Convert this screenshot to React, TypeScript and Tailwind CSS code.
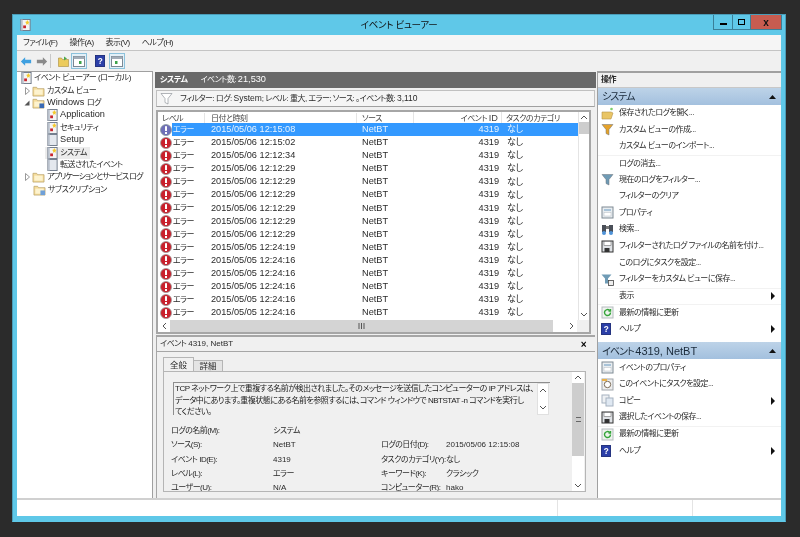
import React from "react";

const font = { fontFamily: '"Liberation Sans","Noto Sans CJK JP",sans-serif' };

const L = ({ children }: { children: React.ReactNode }) => <span className="text-[9.200px] tracking-normal">{children}</span>;

const Err = ({ sel }: { sel?: boolean }) => (
  <svg width="12" height="12" viewBox="0 0 12 12" className="shrink-0">
    <circle cx="6" cy="6" r="5.5" fill={sel ? "#6f6fb8" : "#c9202c"} stroke={sel ? "#8a9a9a" : "#9a9a9a"} strokeWidth="0.8" />
    <rect x="5" y="2.2" width="2" height="4.8" fill="#fff" />
    <rect x="5" y="8" width="2" height="2" fill="#fff" />
  </svg>
);
const LogIc = ({ star = true }: { star?: boolean }) => (
  <svg width="11" height="12" viewBox="0 0 11 13" className="shrink-0">
    <rect x="0.5" y="0.5" width="10" height="12" fill={star ? "#f4f4f4" : "#e4e8ee"} stroke="#6c7686" />
    <rect x="0.5" y="0.5" width="2" height="12" fill="#b8c0cc" />
    {star && <path d="M7.5 1l.8 1.8 1.7.4-1.3 1.2.3 1.8-1.5-.9-1.5.9.3-1.800-1.300-1.200 1.700-.4z" fill="#f4c92c" />}
    {star && <rect x="3" y="7" width="3" height="3" fill="#c8242c" />}
  </svg>
);
const Folder = ({ badge }: { badge?: string }) => (
  <svg width="13" height="12" viewBox="0 0 14 13" className="shrink-0">
    <path d="M1 2.5h4l1 1.500h7v8H1z" fill="#f5dc9a" stroke="#b9a268" strokeWidth="0.8" />
    <rect x="2.5" y="5" width="9" height="5.5" fill="#fdf3cf" />
    {badge && <rect x="8" y="7" width="5" height="5" fill={badge} />}
  </svg>
);
const Funnel = ({ c }: { c: string }) => (
  <svg width="13" height="13" viewBox="0 0 13 13"><path d="M1 1.5h11L8 6.500v5.500L5 10.500V6.500z" fill={c} stroke="#6b7178" strokeWidth="0.5" /></svg>
);
const Save = () => (
  <svg width="13" height="13" viewBox="0 0 13 13"><rect x="1" y="1" width="11" height="11" fill="#dfe2e6" stroke="#333" /><rect x="3" y="1.500" width="7" height="4" fill="#fff" stroke="#555" strokeWidth="0.5" /><rect x="3.500" y="8" width="5" height="4" fill="#333" /></svg>
);
const Help = () => (
  <svg width="10" height="12" viewBox="0 0 11 13"><rect x="0.5" y="0.500" width="10" height="12" fill="#2b3fa8" stroke="#1b2a78" /><text x="5.500" y="10" fontSize="9" fontWeight="700" textAnchor="middle" fill="#fff" fontFamily="Liberation Sans">?</text></svg>
);
const Refresh = () => (
  <svg width="13" height="13" viewBox="0 0 13 13"><rect x="1" y="1" width="11" height="11" fill="#eef3ee" stroke="#b6bcc0" /><path d="M9.500 6.500a3 3 0 1 1-1-2.200M9.500 3v2H7.500" fill="none" stroke="#34a53a" strokeWidth="1.400" /></svg>
);
const Page = () => (
  <svg width="13" height="13" viewBox="0 0 13 13"><rect x="1" y="1" width="11" height="11" fill="#e8edf0" stroke="#7f8a94" /><rect x="3" y="3" width="7" height="2" fill="#a9c3d8" /><rect x="3" y="6.500" width="7" height="3.500" fill="#fff" stroke="#b5bcc2" strokeWidth="0.500" /></svg>
);
const Binoc = () => (
  <svg width="13" height="13" viewBox="0 0 13 13"><rect x="1" y="2" width="4" height="7" fill="#4a4f58" /><rect x="8" y="2" width="4" height="7" fill="#4a4f58" /><rect x="5" y="3" width="3" height="3" fill="#777" /><circle cx="3" cy="10" r="2" fill="#4f93d8" /><circle cx="10" cy="10" r="2" fill="#4f93d8" /></svg>
);
const Open = () => (
  <svg width="13" height="13" viewBox="0 0 13 13"><path d="M1 5h9l2 1-2 6H1z" fill="#e9c566" stroke="#b7934a" strokeWidth="0.600" /><circle cx="10.500" cy="2" r="1.300" fill="#7ccf6a" /></svg>
);
const Clock = () => (
  <svg width="13" height="13" viewBox="0 0 13 13"><rect x="1" y="1" width="11" height="11" fill="#eee" stroke="#a0a6ac" /><circle cx="6.500" cy="6.500" r="3.200" fill="#fff" stroke="#7a6a55" /><path d="M1 1h5v2H1z" fill="#e9b04a" /></svg>
);
const Copy = () => (
  <svg width="13" height="13" viewBox="0 0 13 13"><rect x="1" y="1" width="7" height="8" fill="#eef1f4" stroke="#a6b2c0" /><rect x="5" y="4" width="7" height="8" fill="#dfe8f2" stroke="#a6b2c0" /></svg>
);
const FunnelSave = () => (
  <svg width="13" height="13" viewBox="0 0 13 13"><path d="M0.500 1.500h10L7 5.500v5H4v-5z" fill="#6f9bb5" /><rect x="7.500" y="7.500" width="5" height="5" fill="#eee" stroke="#444" strokeWidth="0.800" /></svg>
);
const Arrow = ({ c, left }: { c: string; left?: boolean }) => (
  <svg width="12" height="11" viewBox="0 0 14 12" className="shrink-0"><path d={left ? "M1 6l5-5v3h7v4H6v3z" : "M13 6L8 1v3H1v4h7v3z"} fill={c} /></svg>
);
const ToolPane = ({ right }: { right?: boolean }) => (
  <div className="w-[16px] h-[16px] shrink-0 flex items-center justify-center border border-[#8cc2dc] bg-[#e3f0f8]">
    <svg width="12" height="11" viewBox="0 0 12 11"><rect x="0.500" y="0.500" width="11" height="10" fill="#fff" stroke="#7b8894" /><rect x="0.500" y="0.500" width="11" height="2.500" fill="#a3adb8" /><rect x={right ? 4 : 6} y="5" width="2.500" height="3" fill="#3ca24a" /></svg>
  </div>
);
const ToolFolder = () => (
  <svg width="11" height="12" viewBox="0 0 11 12" className="shrink-0"><path d="M0.500 3h3l1 1.500h6v7h-10z" fill="#eccb5c" stroke="#a98c3c" strokeWidth="0.600" /><path d="M6 4V1.500l3 2-3 2z" fill="#4ca84c" /></svg>
);

const Tree = ({ pad, arrow, icon, label, sel }: { pad: string; arrow?: "r" | "d"; icon: React.ReactNode; label: React.ReactNode; sel?: boolean }) => (
  <div className={`flex items-center h-[12.400px] whitespace-nowrap ${pad}`}>
    {arrow && (
      <span className="w-[10px] flex justify-center shrink-0">
        {arrow === "r" && <svg width="5" height="8" viewBox="0 0 5 8"><path d="M0.500 0.500L4.500 4l-4 3.500z" fill="#fff" stroke="#808080" strokeWidth="0.800" /></svg>}
        {arrow === "d" && <svg width="6" height="6" viewBox="0 0 6 6"><path d="M5.500 0.500v5h-5z" fill="#555" /></svg>}
      </span>
    )}
    <span className={`flex items-center gap-[2px] ${sel ? "bg-[#ececec] -ml-[2px] pl-[2px] pr-[3px]" : ""}`}>
      {icon}
      <span>{label}</span>
    </span>
  </div>
);

const rows = [
  "2015/05/06 12:15:08", "2015/05/06 12:15:02", "2015/05/06 12:12:34", "2015/05/06 12:12:29", "2015/05/06 12:12:29",
  "2015/05/06 12:12:29", "2015/05/06 12:12:29", "2015/05/06 12:12:29", "2015/05/06 12:12:29", "2015/05/05 12:24:19",
  "2015/05/05 12:24:16", "2015/05/05 12:24:16", "2015/05/05 12:24:16", "2015/05/05 12:24:16", "2015/05/05 12:24:16",
];

const Action = ({ icon, label, more, sep }: { icon?: React.ReactNode; label: string; more?: boolean; sep?: boolean }) => (
  <div className={`flex items-center h-[16.600px] pl-[3px] pr-[6px] whitespace-nowrap ${sep ? "border-t border-[#f2f2f2]" : ""}`}>
    <span className="w-[18px] flex justify-start shrink-0">{icon}</span>
    <span className="flex-1">{label}</span>
    {more && <svg width="4" height="8" viewBox="0 0 4 8"><path d="M0 0l4 4-4 4z" fill="#111" /></svg>}
  </div>
);

const Section = ({ title, rest }: { title: string; rest?: string }) => (
  <div className="flex items-center justify-between h-[17px] pl-[4px] pr-[5px] bg-gradient-to-b from-[#bdd3e8] to-[#a3c0de] text-[10px] tracking-[-1px] text-[#1a2a3a]">
    <span>{title}{rest && <span className="text-[11px] tracking-normal">{rest}</span>}</span>
    <svg width="7" height="4" viewBox="0 0 7 4"><path d="M3.500 0L7 4H0z" fill="#111" /></svg>
  </div>
);

const ScrollBtn = ({ d }: { d: string }) => (
  <svg width="8" height="5" viewBox="0 0 8 5"><path d={d} fill="none" stroke="#555" strokeWidth="1" /></svg>
);
const UP = "M1 4l3-3 3 3";
const DOWN = "M1 1l3 3 3-3";

const V = ({ children }: { children: React.ReactNode }) => <span className="text-[8px] tracking-normal">{children}</span>;

const Field = ({ a, b, c, d }: { a: string; b: React.ReactNode; c?: string; d?: React.ReactNode }) => (
  <div className="grid grid-cols-[102px_108px_65px_1fr] h-[14.300px] items-center whitespace-nowrap">
    <span>{a}</span><span>{b}</span><span>{c}</span><span>{d}</span>
  </div>
);

export default function App() {
  return (
    <div className="w-[800px] h-[537px] overflow-hidden bg-[#2b2b2b] pt-[14px] pl-[12px] text-[8px] tracking-[-0.5px] text-[#2a2a2a] [font-feature-settings:'palt'] blur-[0.3px]" style={font}>
      <div className="w-[774px] h-[508px] bg-[#5fc8e8] flex flex-col pl-[4px] pr-[4px] pb-[5px] border border-[#4a9cb8] border-b-[#5fc8e8]">
        <div className="h-[20px] shrink-0 flex items-center relative -mx-[4px] pl-[7px]">
          <LogIc />
          <div className="absolute inset-x-0 top-[3px] text-center text-[9.500px] tracking-[-0.300px] text-[#111]">イベント ビューアー</div>
          <div className="flex-1" />
          <div className="flex items-start self-start h-[15px] mr-[3px] border-b border-x border-[#3a7f98]">
            <div className="w-[19px] h-full flex items-center justify-center border-r border-[#3a7f98]"><div className="w-[7px] h-[2px] mt-[3px] bg-black" /></div>
            <div className="w-[18px] h-full flex items-center justify-center border-r border-[#3a7f98]"><div className="w-[7px] h-[6px] border-[1.500px] border-black" /></div>
            <div className="w-[30px] h-full flex items-center justify-center bg-[#c75c50] text-[#111] text-[10px] tracking-normal font-bold">x</div>
          </div>
        </div>
        <div className="h-[16px] shrink-0 bg-[#f5f5f5] border-b border-[#c4c4c4] flex items-center gap-[12px] pl-[6px]">
          <span>ファイル(F)</span><span>操作(A)</span><span>表示(V)</span><span>ヘルプ(H)</span>
        </div>
        <div className="h-[20px] shrink-0 bg-[#f0f0f0] flex items-center pl-[3px]">
          <Arrow c="#3fa0e0" left />
          <span className="ml-[4px]"><Arrow c="#8a8a8a" /></span>
          <span className="w-px h-[14px] bg-[#c8c8c8] ml-[2px]" />
          <span className="ml-[7px]"><ToolFolder /></span>
          <span className="ml-[2px]"><ToolPane /></span>
          <span className="ml-[8px]"><Help /></span>
          <span className="ml-[4px]"><ToolPane right /></span>
        </div>
        <div className="flex-1 min-h-0 flex bg-[#f0f0f0]">
          {/* tree */}
          <div className="w-[136px] shrink-0 bg-white border-t border-[#a0a0a0] border-r border-r-[#a0a0a0]">
            <Tree pad="pl-[4px]" icon={<LogIc star />} label="イベント ビューアー (ローカル)" />
            <Tree pad="pl-[5px]" arrow="r" icon={<Folder />} label="カスタム ビュー" />
            <Tree pad="pl-[5px]" arrow="d" icon={<Folder badge="#3b6bb5" />} label={<><L>Windows </L>ログ</>} />
            <Tree pad="pl-[30px]" icon={<LogIc />} label={<L>Application</L>} />
            <Tree pad="pl-[30px]" icon={<LogIc />} label="セキュリティ" />
            <Tree pad="pl-[30px]" icon={<LogIc star={false} />} label={<L>Setup</L>} />
            <Tree pad="pl-[30px]" icon={<LogIc />} label="システム" sel />
            <Tree pad="pl-[30px]" icon={<LogIc star={false} />} label="転送されたイベント" />
            <Tree pad="pl-[5px]" arrow="r" icon={<Folder />} label={<span className="tracking-[-1px]">アプリケーションとサービス ログ</span>} />
            <Tree pad="pl-[16px]" icon={<Folder badge="#6fa0d8" />} label="サブスクリプション" />
          </div>
          {/* center */}
          <div className="w-[441px] shrink-0 ml-[2px] mr-px flex flex-col">
            <div className="h-[16px] shrink-0 bg-[#696969] text-white flex items-center pl-[5px] gap-[13px] mt-px">
              <span className="font-bold">システム</span><span>イベント数: <L>21,530</L></span>
            </div>
            <div className="h-[17px] shrink-0 mt-[2px] mx-px border border-[#c0c0c0] border-b-[#a0a0a0] flex items-center pl-[3px] gap-[7px] bg-[#f5f5f5] whitespace-nowrap">
              <Funnel c="#fff" />
              <span>フィルター: ログ: <span className="text-[8.500px] tracking-normal">System</span>; レベル: 重大, エラー; ソース: 。イベント数: <span className="text-[8.500px] tracking-normal">3,110</span></span>
            </div>
            <div className="h-[224px] shrink-0 mt-[3px] ml-px mr-[5px] border-2 border-[#a6a6a6] bg-white flex flex-col overflow-hidden">
              <div className="flex flex-1 min-h-0">
                <div className="flex-1 min-w-0">
                  <div className="grid grid-cols-[47px_152px_56px_89px_1fr] h-[11px] items-center whitespace-nowrap text-[#444]">
                    <span className="pl-[4px] border-r border-[#e4e4e4]">レベル</span>
                    <span className="pl-[6px] border-r border-[#e4e4e4]">日付と時刻</span>
                    <span className="pl-[5px]">ソース</span>
                    <span className="text-right pr-[3px] border-x border-[#e4e4e4]">イベント <L>ID</L></span>
                    <span className="pl-[4px]">タスクのカテゴリ</span>
                  </div>
                  {rows.map((r, i) => (
                    <div key={i} className="flex h-[13.100px] items-center whitespace-nowrap">
                      <span className="w-[14px] pl-[2px] shrink-0"><Err sel={i === 0} /></span>
                      <div className={`flex-1 grid grid-cols-[33px_152px_56px_89px_1fr] items-center h-full ${i === 0 ? "bg-[#3399ff] text-[#e8f4ff]" : ""}`}>
                        <span className="pl-px">エラー</span>
                        <span className="pl-[6px]"><L>{r}</L></span>
                        <span className="pl-[5px]"><L>NetBT</L></span>
                        <span className="text-right pr-[3px]"><L>4319</L></span>
                        <span className="pl-[5px] text-[9px]">なし</span>
                      </div>
                    </div>
                  ))}
                </div>
                <div className="w-[11px] shrink-0 flex flex-col bg-white border-l border-[#e4e4e4]">
                  <div className="h-[10px] flex items-center justify-center"><ScrollBtn d={UP} /></div>
                  <div className="h-[12px] bg-[#cdcdcd]" />
                  <div className="flex-1" />
                  <div className="h-[12px] flex items-center justify-center"><ScrollBtn d={DOWN} /></div>
                </div>
              </div>
              <div className="h-[12px] shrink-0 flex items-stretch bg-white">
                <div className="w-[12px] flex items-center justify-center"><svg width="5" height="8" viewBox="0 0 5 8"><path d="M4 1L1 4l3 3" fill="none" stroke="#555" /></svg></div>
                <div className="w-[383px] bg-[#d4d4d4] flex items-center justify-center">
                  <svg width="7" height="6" viewBox="0 0 7 6"><path d="M1 0v6M3.500 0v6M6 0v6" stroke="#555" /></svg>
                </div>
                <div className="flex-1 bg-white" />
                <div className="w-[12px] flex items-center justify-center"><svg width="5" height="8" viewBox="0 0 5 8"><path d="M1 1l3 3-3 3" fill="none" stroke="#555" /></svg></div>
                <div className="w-[12px] bg-[#f0f0f0]" />
              </div>
            </div>
            <div className="flex-1 min-h-0 mt-px mx-px border-t-2 border-[#a6a6a6] border-l border-l-[#a6a6a6] flex flex-col overflow-hidden">
              <div className="h-[15px] shrink-0 flex items-center justify-between pl-[3px] pr-[9px] border-b border-[#a6a6a6]">
                <span>イベント <V>4319, NetBT</V></span>
                <span className="font-bold text-[10px] text-black">×</span>
              </div>
              <div className="flex h-[20px] pl-[6px] items-end shrink-0">
                <div className="h-[15px] w-[31px] bg-[#f0f0f0] border border-[#b5b5b5] border-b-0 flex items-center justify-center tracking-normal text-[8.500px]">全般</div>
                <div className="h-[12px] w-[29px] bg-[#e4e4e4] border border-[#b5b5b5] border-b-0 border-l-0 flex items-center justify-center tracking-normal text-[8.500px]">詳細</div>
              </div>
              <div className="h-[121px] shrink-0 ml-[6px] mr-[9px] border border-[#b5b5b5] bg-[#f0f0f0] flex overflow-hidden -mt-px">
                <div className="flex-1 min-w-0 pl-[9px] pt-[10px]">
                  <div className="w-[377px] h-[33px] border border-[#8e8e8e] border-r-0 border-b-0 flex">
                    <div className="flex-1 pl-px leading-[11.500px] tracking-[-0.500px] text-[#222] whitespace-nowrap">
                      TCP ネットワーク上で重複する名前が検出されました。そのメッセージを送信したコンピューターの IP アドレスは、<br />
                      データ中にあります。重複状態にある名前を参照するには、コマンド ウィンドウで NBTSTAT -n コマンドを実行し<br />
                      てください。
                    </div>
                    <div className="w-[12px] shrink-0 bg-white border border-[#e0e0e0] flex flex-col justify-between items-center py-[4px] mr-px">
                      <ScrollBtn d={UP} /><ScrollBtn d={DOWN} />
                    </div>
                  </div>
                  <div className="mt-[9px] -ml-[2px]">
                    <Field a="ログの名前(M):" b="システム" />
                    <Field a="ソース(S):" b={<V>NetBT</V>} c="ログの日付(D):" d={<V>2015/05/06 12:15:08</V>} />
                    <Field a="イベント ID(E):" b={<V>4319</V>} c="タスクのカテゴリ(Y):" d="なし" />
                    <Field a="レベル(L):" b="エラー" c="キーワード(K):" d="クラシック" />
                    <Field a="ユーザー(U):" b={<V>N/A</V>} c="コンピューター(R):" d={<V>hako</V>} />
                  </div>
                </div>
                <div className="w-[12px] shrink-0 flex flex-col bg-white mr-px">
                  <div className="h-[11px] flex items-center justify-center"><ScrollBtn d={UP} /></div>
                  <div className="h-[73px] bg-[#cdcdcd] flex items-center justify-center"><div className="w-[5px] h-[5px] border-y border-[#666]" /></div>
                  <div className="flex-1" />
                  <div className="h-[12px] flex items-center justify-center"><ScrollBtn d={DOWN} /></div>
                </div>
              </div>
              <div className="flex-1" />
            </div>
          </div>
          {/* right */}
          <div className="flex-1 min-w-0 bg-white border-t-2 border-l border-[#a0a0a0] flex flex-col">
            <div className="h-[15px] shrink-0 bg-[#f0f0f0] flex items-center pl-[3px] font-bold border-b border-[#c8c8c8]">操作</div>
            <Section title="システム" />
            <Action icon={<Open />} label="保存されたログを開く..." />
            <Action icon={<Funnel c="#e5a22a" />} label="カスタム ビューの作成..." />
            <Action label="カスタム ビューのインポート..." />
            <Action label="ログの消去..." sep />
            <Action icon={<Funnel c="#6f9bb5" />} label="現在のログをフィルター..." />
            <Action label="フィルターのクリア" />
            <Action icon={<Page />} label="プロパティ" />
            <Action icon={<Binoc />} label="検索..." />
            <Action icon={<Save />} label="フィルターされたログ ファイルの名前を付け..." />
            <Action label="このログにタスクを設定..." />
            <Action icon={<FunnelSave />} label="フィルターをカスタム ビューに保存..." />
            <Action label="表示" more sep />
            <Action icon={<Refresh />} label="最新の情報に更新" sep />
            <Action icon={<Help />} label="ヘルプ" more />
            <div className="h-[5px] shrink-0" />
            <Section title="イベント " rest="4319, NetBT" />
            <Action icon={<Page />} label="イベントのプロパティ" />
            <Action icon={<Clock />} label="このイベントにタスクを設定..." />
            <Action icon={<Copy />} label="コピー" more />
            <Action icon={<Save />} label="選択したイベントの保存..." />
            <Action icon={<Refresh />} label="最新の情報に更新" sep />
            <Action icon={<Help />} label="ヘルプ" more />
          </div>
        </div>
        <div className="h-[18px] shrink-0 bg-white border-t-2 border-[#d0d0d0] flex">
          <div className="w-[541px] border-r border-[#e4e4e4]" />
          <div className="w-[135px] border-r border-[#e4e4e4]" />
          <div className="flex-1" />
        </div>
      </div>
    </div>
  );
}
